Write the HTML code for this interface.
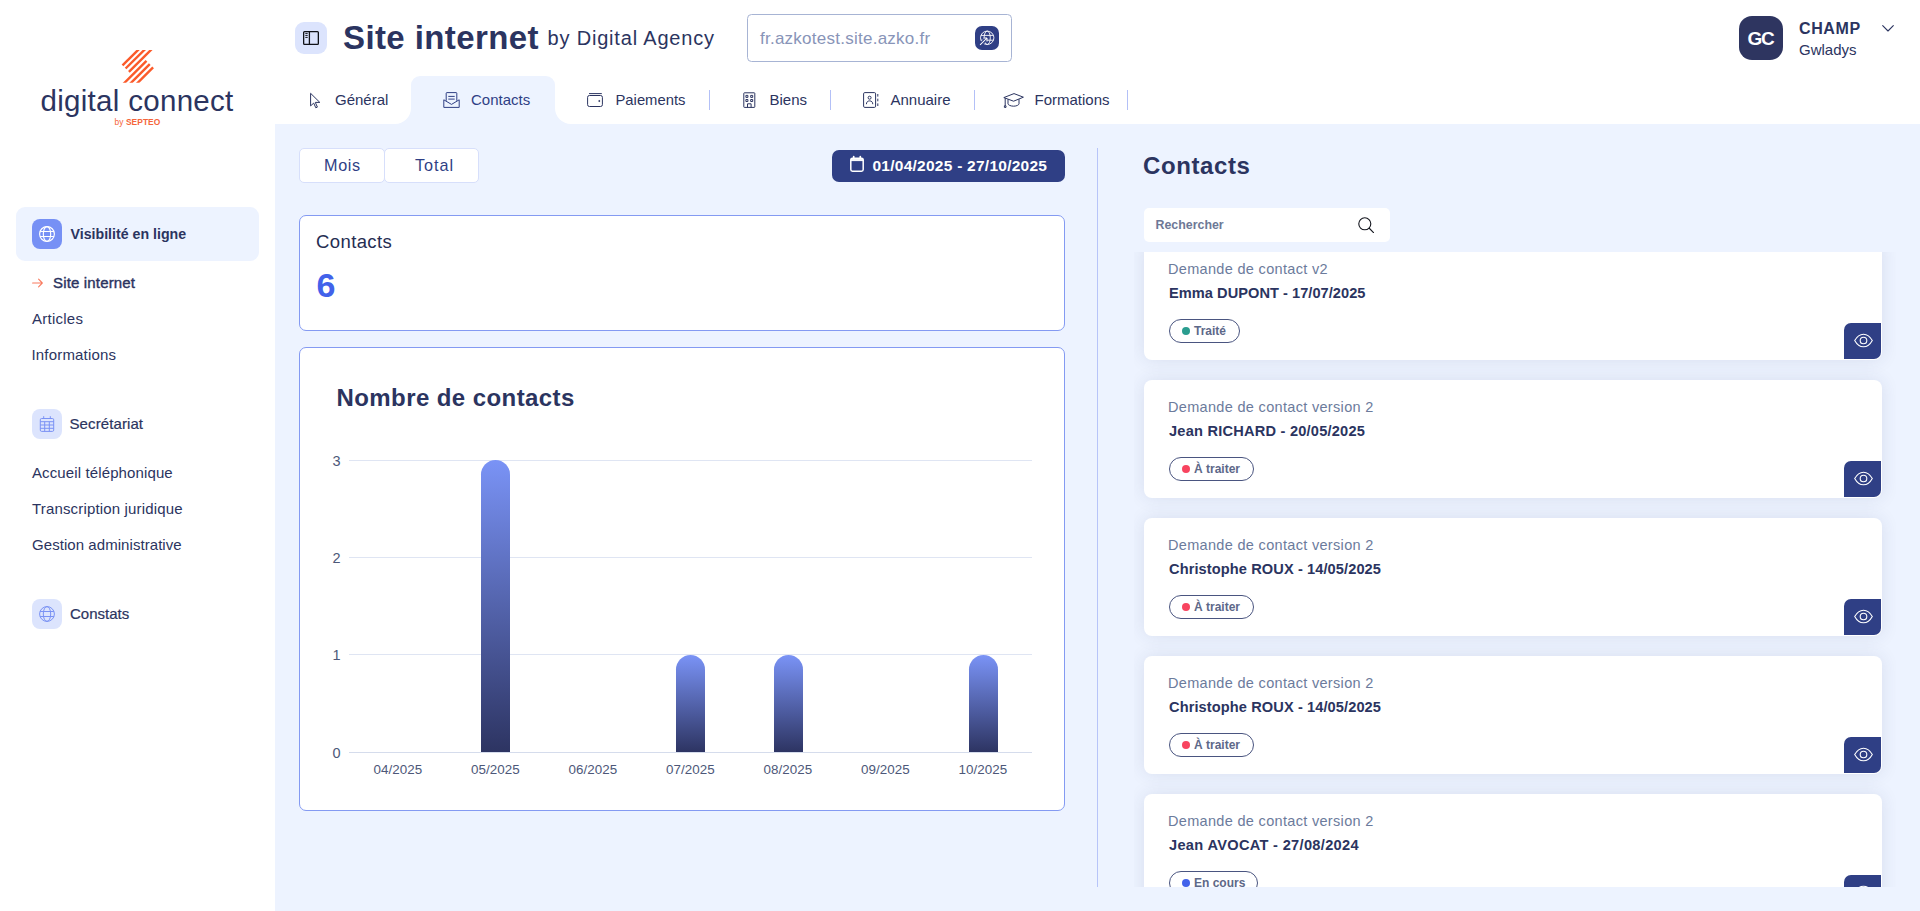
<!DOCTYPE html>
<html lang="fr">
<head>
<meta charset="utf-8">
<title>Site internet - Contacts</title>
<style>
*{box-sizing:border-box;margin:0;padding:0}
html,body{width:1920px;height:911px;overflow:hidden;background:#fff}
body{font-family:"Liberation Sans",sans-serif;color:#2b3460;position:relative}
.abs{position:absolute}
.t{position:absolute;white-space:nowrap;line-height:1;transform-origin:0 0}
svg{display:block;overflow:visible}
#content{position:absolute;left:275px;top:124px;width:1645px;height:787px;background:#edf3ff}
/* sidebar */
.mi{left:32px;font-size:15px;color:#2b3460}
.ibox{position:absolute;left:32px;width:30px;height:30px;border-radius:8px;background:#dce4fd}
/* tabs */
.tab{font-size:15px;color:#2b3460;top:92px}
.sep{position:absolute;top:90px;width:1.300px;height:20px;background:#b3c0f7}
/* cards */
.box{position:absolute;background:#fff;border:1px solid #849af2;border-radius:7px}
.card{position:absolute;left:0;width:738px;height:118px;background:#fff;border-radius:8px;box-shadow:0 0 18px rgba(46,53,96,.11)}
.card .ti{left:24px;top:20.500px;font-size:14.500px;letter-spacing:.320px;color:#6c7b9c}
.card .nm{left:25px;top:44.500px;font-size:14.600px;letter-spacing:.100px;font-weight:700;color:#2b3460}
.badge{position:absolute;left:25px;top:77px;height:24px;border:1px solid #4a5580;border-radius:12px;background:#fff}
.badge i{position:absolute;left:12px;top:7px;width:8px;height:8px;border-radius:50%}
.badge span{position:absolute;left:24px;top:5.500px;font-size:12px;font-weight:700;color:#5d6889;white-space:nowrap;line-height:1}
.eye{position:absolute;left:700px;top:81px;width:37px;height:36px;background:#2f3f85;border-radius:7px 0 7px 0}
.eye svg{position:absolute;left:9.600px;top:8.500px}
.gl{position:absolute;left:349px;width:683px;height:1px;background:#dfe5f3}
.yl{font-size:14.500px;color:#4d5879;width:20px;text-align:right;left:320.500px}
.xl{font-size:13.400px;letter-spacing:.050px;color:#4d5879;width:80px;text-align:center;top:763px}
.bar{position:absolute;width:29px;border-radius:14.5px 14.5px 0 0;background:linear-gradient(180deg,#7a93f6 0%,#2d3462 100%)}
</style>
</head>
<body>
<div id="content"></div>

<!-- ============ SIDEBAR ============ -->
<div id="sidebar">
  <svg class="abs" style="left:110px;top:40px" width="60" height="50" viewBox="0 0 60 50">
    <clipPath id="lc"><rect x="0" y="10" width="60" height="32.800"/></clipPath>
    <g stroke="#fb5a2a" stroke-width="2.400" clip-path="url(#lc)">
      <line x1="12.500" y1="25.300" x2="30.200" y2="7.900"/>
      <line x1="15.600" y1="28.500" x2="36.500" y2="7.800"/>
      <line x1="18.900" y1="31.800" x2="43.100" y2="7.800"/>
      <line x1="12.300" y1="45" x2="36.500" y2="20.900"/>
      <line x1="18.900" y1="45" x2="39.800" y2="24.100"/>
      <line x1="25.500" y1="45" x2="43.100" y2="27.400"/>
    </g>
  </svg>
  <div class="t" id="logo1" style="left:40.500px;top:86.300px;font-size:29.500px;color:#2b3460;letter-spacing:.300px">digital connect</div>
  <div class="t" id="logo2" style="left:114.500px;top:117.500px;letter-spacing:.080px;font-size:8.400px;color:#f5653a">by <b>SEPTEO</b></div>

  <div class="abs" style="left:16px;top:207px;width:243px;height:54px;border-radius:9px;background:#edf3ff"></div>
  <div class="ibox" style="top:219px;background:#7690f5">
    <svg style="margin:7px" width="16" height="16" viewBox="0 0 16 16" fill="none" stroke="#fff" stroke-width="1.150"><circle cx="8" cy="8" r="7.400"/><ellipse cx="8" cy="8" rx="3.700" ry="7.400"/><path d="M1.100 5.500h13.800M1.100 10.500h13.800"/></svg>
  </div>
  <div class="t" id="m0" style="left:70.500px;top:227px;font-size:14.200px;font-weight:700;color:#2b3460">Visibilité en ligne</div>

  <svg class="abs" style="left:32px;top:278px" width="11" height="10" viewBox="0 0 11 10" fill="none" stroke="#f97a5e" stroke-width="1.1" stroke-linecap="round" stroke-linejoin="round"><path d="M.6 5h9.6M6.6 1.2 10.3 5 6.6 8.8"/></svg>
  <div class="t mi" id="m1" style="left:53px;top:274.800px;font-size:15px;-webkit-text-stroke:.400px #2b3460;letter-spacing:.160px">Site internet</div>
  <div class="t mi" id="m2" style="top:311px;letter-spacing:.250px">Articles</div>
  <div class="t mi" id="m3" style="left:31.500px;top:347px;letter-spacing:.180px">Informations</div>

  <div class="ibox" style="top:409px">
    <svg style="margin:7px" width="16" height="16" viewBox="0 0 16 16" fill="none" stroke="#7a92f4" stroke-width="1"><rect x="1.300" y="2.500" width="13.400" height="12.900" rx="1.300"/><path d="M1.300 5.700h13.400M4.700.2v2.300M11.300.2v2.300M1.300 9h13.400M1.300 12.300h13.400M5.700 5.700v9.700M10.300 5.700v9.700"/></svg>
  </div>
  <div class="t mi" id="m4" style="left:69.500px;top:415.800px;letter-spacing:.100px;-webkit-text-stroke:.200px #2b3460">Secrétariat</div>
  <div class="t mi" id="m5" style="top:465px;letter-spacing:.120px">Accueil téléphonique</div>
  <div class="t mi" id="m6" style="top:501px;letter-spacing:.160px">Transcription juridique</div>
  <div class="t mi" id="m7" style="top:537px;letter-spacing:.060px">Gestion administrative</div>

  <div class="ibox" style="top:599px">
    <svg style="margin:7px" width="16" height="16" viewBox="0 0 16 16" fill="none" stroke="#7a92f4" stroke-width="1"><circle cx="8" cy="8" r="7.400"/><ellipse cx="8" cy="8" rx="3.700" ry="7.400"/><path d="M1.100 5.500h13.800M1.100 10.500h13.800"/></svg>
  </div>
  <div class="t mi" id="m8" style="left:70px;top:605.600px;-webkit-text-stroke:.200px #2b3460">Constats</div>
</div>

<!-- ============ HEADER ============ -->
<div id="header">
  <div class="abs" style="left:295px;top:22px;width:32px;height:32px;border-radius:9px;background:#dce4fd">
    <svg style="margin:8px" width="16" height="16" viewBox="0 0 16 16" fill="none" stroke="#101218" stroke-width="1.300"><rect x=".65" y="1.650" width="14.700" height="12.700" rx=".9"/><path d="M6.400 1.650v12.700"/><path d="M2.300 3.400h2.400M2.300 5.400h2.400M2.300 7.400h2.400" stroke-width="1"/></svg>
  </div>
  <div class="t" id="h1" style="left:343px;top:21px;font-size:33px;font-weight:700;color:#2b3460;letter-spacing:.400px">Site internet</div>
  <div class="t" id="h2" style="left:547.500px;top:27.500px;font-size:20px;color:#2b3460;letter-spacing:.820px">by Digital Agency</div>

  <div class="abs" style="left:747px;top:14px;width:265px;height:48px;border:1px solid #a7b4d4;border-radius:4.500px;background:#fff"></div>
  <div class="t" id="url" style="left:760px;top:29.500px;font-size:17px;color:#8894b8;letter-spacing:.250px">fr.azkotest.site.azko.fr</div>
  <div class="abs" style="left:975px;top:26px;width:24px;height:24px;border-radius:7px;background:#2f3f85">
    <svg width="24" height="24" viewBox="0 0 24 24" fill="none" stroke="#fff" stroke-width=".9"><circle cx="12.200" cy="11.800" r="6.700"/><ellipse cx="12.200" cy="11.800" rx="3.100" ry="6.700"/><path d="M6 9.400h12.400M6 14.200h12.400"/><path d="M4.600 19.400 11.300 12.700" stroke="#2f3f85" stroke-width="3.400"/><path d="M5.100 18.900 12 12M12 12H8.600M12 12v3.400" stroke-width="1.050"/></svg>
  </div>

  <div class="abs" style="left:1739px;top:16px;width:44px;height:44px;border-radius:13px;background:#2e3560"></div>
  <div class="t" id="gc" style="left:1747.500px;top:28.500px;font-size:19px;font-weight:700;color:#fff;letter-spacing:-1.200px">GC</div>
  <div class="t" id="u1" style="left:1799px;top:21px;font-size:16px;font-weight:700;color:#2b3460;letter-spacing:.600px">CHAMP</div>
  <div class="t" id="u2" style="left:1799px;top:41.800px;font-size:15px;color:#2b3460">Gwladys</div>
  <svg class="abs" style="left:1882px;top:25px" width="12" height="7" viewBox="0 0 12 7" fill="none" stroke="#2b3460" stroke-width="1.1" stroke-linecap="round" stroke-linejoin="round"><path d="M.7.7 6 6 11.3.7"/></svg>

  <!-- tabs -->
  <div class="abs" style="left:411px;top:76px;width:144px;height:48px;border-radius:9px 9px 0 0;background:#edf3ff"></div>
  <div class="abs" style="left:395px;top:108px;width:16px;height:16px;background:#edf3ff"><div style="width:16px;height:16px;background:#fff;border-bottom-right-radius:16px"></div></div>
  <div class="abs" style="left:555px;top:108px;width:16px;height:16px;background:#edf3ff"><div style="width:16px;height:16px;background:#fff;border-bottom-left-radius:16px"></div></div>

  <svg class="abs" style="left:309.5px;top:93px" width="11" height="15" viewBox="0 0 11 15" fill="none" stroke="#2b3460" stroke-width="1" stroke-linejoin="round"><path d="M.6.3v12.600l3.100-2.800 2.100 4.700 1.600-.7-2.100-4.700h4.500z"/></svg>
  <div class="t tab" id="t1" style="left:335px">Général</div>

  <svg class="abs" style="left:442.5px;top:92px" width="17" height="16" viewBox="0 0 17 16" fill="none" stroke="#2f3f85" stroke-width="1" stroke-linejoin="round"><path d="M3.200 8.800V1.200a.6.6 0 0 1 .6-.6h9.400a.6.6 0 0 1 .6.6v7.600"/><path d="M5.300 4.400h6.400M5.300 7.100h6.400"/><path d="M.8 7.800v7.600h15.400V7.800L8.500 12.400z"/></svg>
  <div class="t tab" id="t2" style="left:471px;color:#2f3f85">Contacts</div>

  <svg class="abs" style="left:586.5px;top:93px" width="17" height="14" viewBox="0 0 17 14" fill="none" stroke="#2b3460" stroke-width="1" stroke-linejoin="round"><path d="M2 .6h12.800"/><rect x=".6" y="2.500" width="14.800" height="11" rx="1.800"/><circle cx="12.300" cy="8" r=".55" fill="#2b3460"/></svg>
  <div class="t tab" id="t3" style="left:615.500px;top:92.700px;font-size:14.800px">Paiements</div>
  <div class="sep" style="left:708.5px"></div>

  <svg class="abs" style="left:742.5px;top:92px" width="13" height="16" viewBox="0 0 13 16" fill="none" stroke="#2b3460" stroke-width="1"><rect x=".8" y=".8" width="11" height="14.600" rx=".6"/><path d="M2.900 3.400h2v2h-2zM7.700 3.400h2v2h-2zM2.900 7.500h2v2h-2zM7.700 7.500h2v2h-2zM4.500 15.400V11.800h3.600v3.600"/></svg>
  <div class="t tab" id="t4" style="left:769.5px">Biens</div>
  <div class="sep" style="left:829.5px"></div>

  <svg class="abs" style="left:862.5px;top:92px" width="16" height="16" viewBox="0 0 16 16" fill="none" stroke="#2b3460" stroke-width="1"><rect x=".6" y=".6" width="12" height="14.800" rx="1.200"/><circle cx="6.600" cy="5.700" r="1.500"/><path d="M3.400 12.200c0-2.200 1.400-3.300 3.200-3.300s3.200 1.100 3.200 3.300M14.800 2v2.600M14.800 6.700v2.600M14.800 11.400V14"/></svg>
  <div class="t tab" id="t5" style="left:890.5px">Annuaire</div>
  <div class="sep" style="left:973.5px"></div>

  <svg class="abs" style="left:1003px;top:92.500px" width="21" height="15" viewBox="0 0 21 15" fill="none" stroke="#2b3460" stroke-width="1" stroke-linejoin="round"><path d="M.8 4.600 11 .6l9.400 3.600L10.600 8.200z"/><path d="M5 6.400v4.400c0 1 2.400 2.400 5.600 2.400s5.400-1.400 5.400-2.400V6.200"/><path d="M2.200 5.200v7.600M1.400 14.400h1.600v-1.600H1.400z"/></svg>
  <div class="t tab" id="t6" style="left:1034.5px">Formations</div>
  <div class="sep" style="left:1126.5px"></div>
</div>

<!-- ============ MAIN LEFT ============ -->
<div id="main">
  <div class="abs" style="left:383.500px;top:148px;width:95.500px;height:35px;border:1px solid #d7dffb;border-radius:5px;background:#fff"></div>
  <div class="abs" style="left:299px;top:148px;width:85.500px;height:35px;border:1px solid #d7dffb;border-radius:5px;background:#fff"></div>
  <div class="t" id="mois" style="left:324px;top:157.300px;font-size:16.200px;color:#2f3f85;letter-spacing:.650px">Mois</div>
  <div class="t" id="total" style="left:415px;top:157.300px;font-size:16.200px;color:#2f3f85;letter-spacing:.950px">Total</div>

  <div class="abs" style="left:832px;top:150px;width:233px;height:32px;border-radius:7px;background:#2f3f85"></div>
  <svg class="abs" style="left:850px;top:156px" width="14" height="16" viewBox="0 0 14 16" fill="none" stroke="#fff" stroke-width="1.500"><rect x=".8" y="2.300" width="12.400" height="12.900" rx="1.700"/><path d="M.8 3.600h12.400v1H.8z" fill="#fff" stroke-width="1"/><path d="M3.700.5v2M10.300.5v2" stroke-width="1.700" stroke-linecap="round"/></svg>
  <div class="t" id="date" style="left:872.500px;top:158px;font-size:15.500px;font-weight:700;color:#fff;letter-spacing:.250px">01/04/2025 - 27/10/2025</div>

  <div class="box" style="left:299px;top:215px;width:766px;height:116px"></div>
  <div class="t" id="c1" style="left:316px;top:232.500px;font-size:18.500px;color:#252d52;letter-spacing:.400px">Contacts</div>
  <div class="t" id="c2" style="left:316.500px;top:267.600px;font-size:34px;font-weight:700;color:#4262ea">6</div>

  <div class="box" style="left:299px;top:347px;width:766px;height:464px"></div>
  <div class="t" id="c3" style="left:336.500px;top:386px;font-size:24px;font-weight:700;color:#2b3460;letter-spacing:.420px">Nombre de contacts</div>

  <div class="gl" style="top:460px"></div>
  <div class="gl" style="top:557px"></div>
  <div class="gl" style="top:654px"></div>
  <div class="gl" style="top:752px;background:#d5dcec"></div>
  <div class="t yl" id="y3" style="top:453.5px">3</div>
  <div class="t yl" id="y2" style="top:550.5px">2</div>
  <div class="t yl" id="y1" style="top:647.5px">1</div>
  <div class="t yl" id="y0" style="top:745.5px">0</div>

  <div class="bar" style="left:481px;top:460px;height:292px"></div>
  <div class="bar" style="left:676px;top:655px;height:97px"></div>
  <div class="bar" style="left:773.500px;top:655px;height:97px"></div>
  <div class="bar" style="left:968.500px;top:655px;height:97px"></div>

  <div class="t xl" id="x1" style="left:358px">04/2025</div>
  <div class="t xl" id="x2" style="left:455.500px">05/2025</div>
  <div class="t xl" id="x3" style="left:553px">06/2025</div>
  <div class="t xl" id="x4" style="left:650.500px">07/2025</div>
  <div class="t xl" id="x5" style="left:748px">08/2025</div>
  <div class="t xl" id="x6" style="left:845.500px">09/2025</div>
  <div class="t xl" id="x7" style="left:943px">10/2025</div>

  <div class="abs" style="left:1097px;top:148px;width:1px;height:739px;background:#b7c4f9"></div>
</div>

<!-- ============ RIGHT LIST ============ -->
<div id="right">
  <div class="t" id="r1" style="left:1143px;top:154px;font-size:24px;font-weight:700;color:#2b3460;letter-spacing:.600px">Contacts</div>
  <div class="abs" style="left:1144px;top:208px;width:246px;height:34px;border-radius:5px;background:#fff"></div>
  <div class="t" id="r2" style="left:1155.500px;top:218.500px;font-size:12.400px;font-weight:700;color:#6d7896">Rechercher</div>
  <svg class="abs" style="left:1357.500px;top:216.500px" width="16.500" height="16.500" viewBox="0 0 17 17" fill="none" stroke="#15171f" stroke-width="1.150" stroke-linecap="round"><circle cx="7" cy="7" r="6.200"/><path d="M11.600 11.600 16 16"/></svg>
  <div class="abs" id="list" style="left:1134px;top:251.500px;width:761.500px;height:635.500px;overflow:hidden">
   <div class="abs" style="left:10px;top:0;width:738px;height:700px">
    <div class="card" style="top:-10px;border-radius:8px">
      <div class="t ti">Demande de contact v2</div>
      <div class="t nm" style="letter-spacing:.040px">Emma DUPONT - 17/07/2025</div>
      <div class="badge" style="width:70.500px"><i style="background:#2a9d8f"></i><span>Traité</span></div>
      <div class="eye"><svg width="19" height="19" viewBox="0 0 19 19" fill="none" stroke="#fff" stroke-width="1.100"><path d="M.7 9.500C3 5.300 6 3.200 9.500 3.200s6.500 2.100 8.800 6.300c-2.300 4.200-5.300 6.300-8.800 6.300S3 13.700.7 9.500z"/><circle cx="9.500" cy="9.500" r="3.300"/></svg></div>
    </div>
    <div class="card" style="top:128px;border-radius:8px">
      <div class="t ti">Demande de contact version 2</div>
      <div class="t nm" style="letter-spacing:.220px">Jean RICHARD - 20/05/2025</div>
      <div class="badge" style="width:85px"><i style="background:#f8445f"></i><span>À traiter</span></div>
      <div class="eye"><svg width="19" height="19" viewBox="0 0 19 19" fill="none" stroke="#fff" stroke-width="1.100"><path d="M.7 9.500C3 5.300 6 3.200 9.500 3.200s6.500 2.100 8.800 6.300c-2.300 4.200-5.300 6.300-8.800 6.300S3 13.700.7 9.500z"/><circle cx="9.500" cy="9.500" r="3.300"/></svg></div>
    </div>
    <div class="card" style="top:266px;border-radius:8px">
      <div class="t ti">Demande de contact version 2</div>
      <div class="t nm">Christophe ROUX - 14/05/2025</div>
      <div class="badge" style="width:85px"><i style="background:#f8445f"></i><span>À traiter</span></div>
      <div class="eye"><svg width="19" height="19" viewBox="0 0 19 19" fill="none" stroke="#fff" stroke-width="1.100"><path d="M.7 9.500C3 5.300 6 3.200 9.500 3.200s6.500 2.100 8.800 6.300c-2.300 4.200-5.300 6.300-8.800 6.300S3 13.700.7 9.500z"/><circle cx="9.500" cy="9.500" r="3.300"/></svg></div>
    </div>
    <div class="card" style="top:404px;border-radius:8px">
      <div class="t ti">Demande de contact version 2</div>
      <div class="t nm">Christophe ROUX - 14/05/2025</div>
      <div class="badge" style="width:85px"><i style="background:#f8445f"></i><span>À traiter</span></div>
      <div class="eye"><svg width="19" height="19" viewBox="0 0 19 19" fill="none" stroke="#fff" stroke-width="1.100"><path d="M.7 9.500C3 5.300 6 3.200 9.500 3.200s6.500 2.100 8.800 6.300c-2.300 4.200-5.300 6.300-8.800 6.300S3 13.700.7 9.500z"/><circle cx="9.500" cy="9.500" r="3.300"/></svg></div>
    </div>
    <div class="card" style="top:542px;border-radius:8px">
      <div class="t ti">Demande de contact version 2</div>
      <div class="t nm" style="letter-spacing:.320px">Jean AVOCAT - 27/08/2024</div>
      <div class="badge" style="width:89px"><i style="background:#4262ea"></i><span>En cours</span></div>
      <div class="eye"><svg width="19" height="19" viewBox="0 0 19 19" fill="none" stroke="#fff" stroke-width="1.100"><path d="M.7 9.500C3 5.300 6 3.200 9.500 3.200s6.500 2.100 8.800 6.300c-2.300 4.200-5.300 6.300-8.800 6.300S3 13.700.7 9.500z"/><circle cx="9.500" cy="9.500" r="3.300"/></svg></div>
    </div>
   </div>
  </div>
</div>
</body>
</html>
